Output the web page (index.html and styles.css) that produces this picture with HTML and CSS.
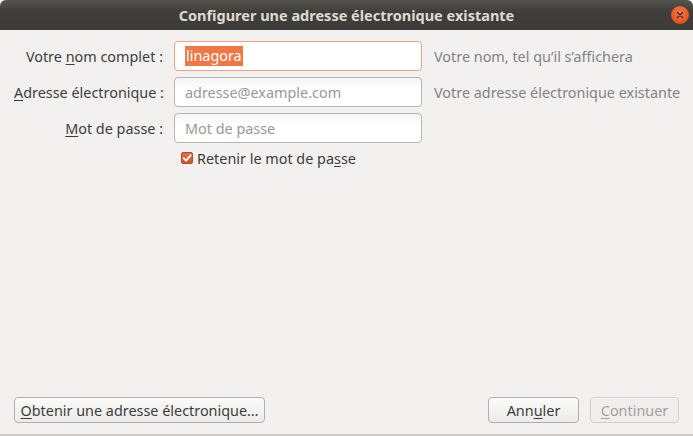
FILE: index.html
```html
<!DOCTYPE html>
<html lang="fr">
<head>
<meta charset="utf-8">
<link rel="stylesheet" href="styles.css">
</head>
<body>
<div class="window">
  <div class="titlebar">
    <span class="title">Configurer une adresse électronique existante</span>
    <span class="close"><svg width="18" height="18" viewBox="0 0 18 18"><path d="M6.5 6.5 L11.5 11.5 M11.5 6.5 L6.5 11.5" stroke="#3a2a20" stroke-width="1.3" stroke-linecap="round"/></svg></span>
  </div>
  <div class="content">
    <div class="form">
      <div class="row">
        <label class="label">Votre <u>n</u>om complet :</label>
        <div class="input focused"><span class="sel">linagora</span></div>
        <span class="hint">Votre nom, tel qu’il s’affichera</span>
      </div>
      <div class="row">
        <label class="label"><u>A</u>dresse électronique :</label>
        <div class="input"><span class="ph">adresse@example.com</span></div>
        <span class="hint">Votre adresse électronique existante</span>
      </div>
      <div class="row">
        <label class="label"><u>M</u>ot de passe :</label>
        <div class="input"><span class="ph">Mot de passe</span></div>
      </div>
      <div class="row check-row">
        <span class="label"></span>
        <div class="check">
          <span class="box"><svg width="12" height="12" viewBox="0 0 12 12"><path d="M2.6 6.2 L5 8.6 L9.6 3.4" fill="none" stroke="#fff" stroke-width="1.8" stroke-linecap="round" stroke-linejoin="round"/></svg></span>
          <span>Retenir le mot de pa<u>s</u>se</span>
        </div>
      </div>
    </div>
    <div class="footer">
      <button class="btn get"><u>O</u>btenir une adresse électronique…</button>
      <div class="right">
        <button class="btn cancel">Ann<u>u</u>ler</button>
        <button class="btn disabled"><u>C</u>ontinuer</button>
      </div>
    </div>
  </div>
</div>
</body>
</html>
```

FILE: styles.css
```css
* { box-sizing: border-box; }
html, body { margin: 0; padding: 0; }
body {
  width: 693px;
  height: 436px;
  overflow: hidden;
  font-family: "Noto Sans", "DejaVu Sans", sans-serif;
  font-size: 14.4px;
  color: #3c3c3c;
  background: #f2f1f0;
}
.window {
  width: 693px;
  height: 436px;
  display: flex;
  flex-direction: column;
  border-bottom: 2px solid #cfccc7;
}
.titlebar {
  height: 30px;
  flex: none;
  background: linear-gradient(#55534d, #3f3e3a 40%, #3c3b37);
  border-radius: 6px 6px 0 0;
  display: flex;
  align-items: center;
  justify-content: center;
  position: relative;
}
.title {
  color: #dfdbd2;
  font-family: "Noto Sans", "DejaVu Sans", sans-serif;
  font-weight: bold;
  font-size: 14.5px;
  letter-spacing: 0;
}
.close {
  position: absolute;
  right: 4px;
  top: 6px;
  width: 18px;
  height: 18px;
  border-radius: 50%;
  background: radial-gradient(circle at 50% 35%, #f37b4c, #e5521f 70%, #c8431a);
  display: flex;
}
.content {
  flex: 1;
  display: flex;
  flex-direction: column;
  justify-content: space-between;
  padding: 11px 14px 11px 14px;
}
.form {
  display: flex;
  flex-direction: column;
  gap: 6px;
}
.row {
  display: flex;
  align-items: center;
  height: 30px;
}
.label {
  width: 160px;
  text-align: right;
  padding-right: 11px;
  white-space: nowrap;
  flex: none;
}
.input {
  width: 248px;
  height: 30px;
  flex: none;
  border: 1px solid #b8b5b1;
  border-radius: 4px;
  background: linear-gradient(#f4f4f3, #ffffff 40%);
  display: flex;
  align-items: center;
  padding-left: 10px;
}
.input.focused {
  border-color: #f1a17f;
  background: #fff;
}
.sel {
  background: #f07746;
  color: #fff;
  line-height: 20px;
  padding: 0 1px;
}
.ph { color: #9a9894; }
.hint {
  margin-left: 12px;
  color: #838180;
  white-space: nowrap;
}
.check-row { height: 18px; margin-top: 0; }
.check {
  display: flex;
  align-items: center;
  gap: 4px;
  margin-left: 7px;
}
.box {
  width: 12px;
  height: 12px;
  border-radius: 2px;
  background: linear-gradient(#e2734a, #c9532a);
  border: 1px solid #b04a24;
  display: flex;
  align-items: center;
  justify-content: center;
}
.box svg { flex: none; }
.footer {
  display: flex;
  justify-content: space-between;
  align-items: center;
}
.right { display: flex; gap: 11px; }
.btn {
  font-family: inherit;
  font-size: 14.4px;
  color: #3c3c3c;
  height: 26px;
  border: 1px solid #b2afaa;
  border-radius: 4px;
  background: linear-gradient(#fbfbfa, #ecebe9);
  padding: 0 4px;
  white-space: nowrap;
  box-shadow: 0 1px 0 rgba(255,255,255,0.6) inset;
}
.btn.get { width: 251px; }
.btn.cancel { width: 91px; }
.btn.disabled {
  width: 89px;
  color: #a3a19d;
  border-color: #d3d0cc;
  background: #efeeec;
}
u { text-decoration-thickness: 1px; text-underline-offset: 2px; }
```
